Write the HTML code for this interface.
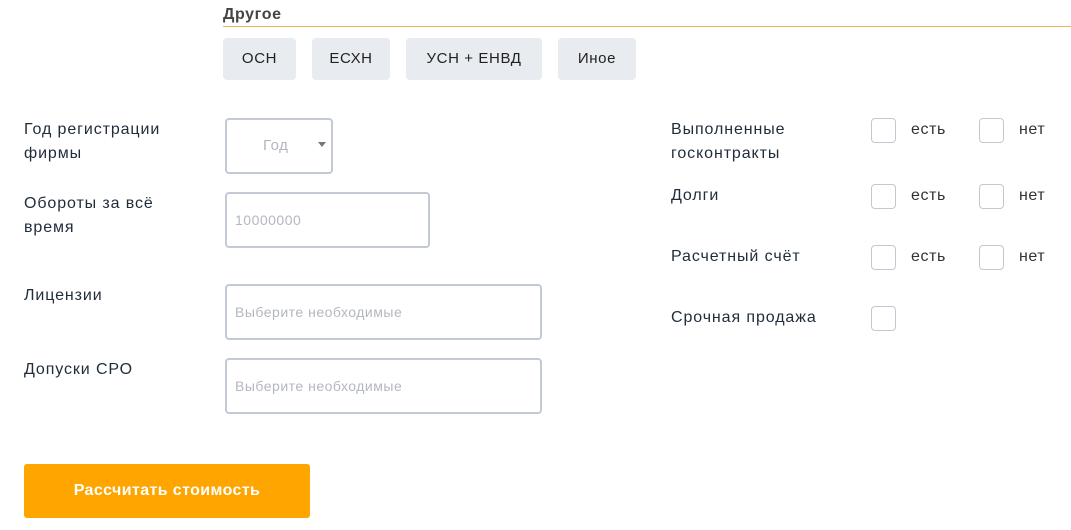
<!DOCTYPE html>
<html><head><meta charset="utf-8"><style>
*{margin:0;padding:0;box-sizing:border-box}
body{width:1071px;height:530px;background:#fff;font-family:"Liberation Sans",sans-serif;position:relative;overflow:hidden;color:#222d3c}
.a{position:absolute;white-space:nowrap}
.h{left:223px;top:6px;font-size:16px;font-weight:bold;color:#444;letter-spacing:0.6px}
.line{left:223px;top:26px;width:848px;height:1px;background:#e9b45a}
.tag{top:38px;height:42px;background:#e8ebef;border-radius:4px;font-size:15px;line-height:42px;text-align:center;color:#222;letter-spacing:0.6px}
.lbl{font-size:16px;line-height:24px;color:#222d3c;letter-spacing:0.9px}
.in{border:2px solid #c4cad5;border-radius:4px;font-size:14px;color:#b3b7bf;padding-left:8px;letter-spacing:0.5px}
.cb{width:25px;height:25px;border:1px solid #c3c8d0;border-radius:4px}
.t{font-size:16px;color:#333;letter-spacing:0.6px}
.btn{left:24px;top:464px;width:286px;height:54px;background:#fea500;border-radius:3px;color:#fff;font-weight:bold;font-size:16px;text-align:center;line-height:54px;letter-spacing:0.4px}
</style></head><body>
<div class="a h">Другое</div>
<div class="a line"></div>
<div class="a tag" style="left:223px;width:73px">ОСН</div>
<div class="a tag" style="left:312px;width:78px">ЕСХН</div>
<div class="a tag" style="left:406px;width:136px">УСН + ЕНВД</div>
<div class="a tag" style="left:558px;width:78px">Иное</div>

<div class="a lbl" style="left:24px;top:118px">Год регистрации<br>фирмы</div>
<div class="a in" style="left:225px;top:118px;width:108px;height:56px;line-height:52px;padding-left:36px;font-size:15px">Год</div>
<div class="a" style="left:318px;top:142px;width:0;height:0;border-left:4px solid transparent;border-right:4px solid transparent;border-top:5px solid #777"></div>

<div class="a lbl" style="left:24px;top:192px">Обороты за всё<br>время</div>
<div class="a in" style="left:225px;top:192px;width:205px;height:56px;line-height:52px">10000000</div>

<div class="a lbl" style="left:24px;top:284px">Лицензии</div>
<div class="a in" style="left:225px;top:284px;width:317px;height:56px;line-height:52px">Выберите необходимые</div>

<div class="a lbl" style="left:24px;top:358px">Допуски СРО</div>
<div class="a in" style="left:225px;top:358px;width:317px;height:56px;line-height:52px">Выберите необходимые</div>

<div class="a lbl" style="left:671px;top:118px">Выполненные<br>госконтракты</div>
<div class="a cb" style="left:871px;top:118px"></div><div class="a t" style="left:911px;top:121px">есть</div>
<div class="a cb" style="left:979px;top:118px"></div><div class="a t" style="left:1019px;top:121px">нет</div>

<div class="a lbl" style="left:671px;top:184px">Долги</div>
<div class="a cb" style="left:871px;top:184px"></div><div class="a t" style="left:911px;top:187px">есть</div>
<div class="a cb" style="left:979px;top:184px"></div><div class="a t" style="left:1019px;top:187px">нет</div>

<div class="a lbl" style="left:671px;top:245px">Расчетный счёт</div>
<div class="a cb" style="left:871px;top:245px"></div><div class="a t" style="left:911px;top:248px">есть</div>
<div class="a cb" style="left:979px;top:245px"></div><div class="a t" style="left:1019px;top:248px">нет</div>

<div class="a lbl" style="left:671px;top:306px">Срочная продажа</div>
<div class="a cb" style="left:871px;top:306px"></div>

<div class="a btn">Рассчитать стоимость</div>
</body></html>
